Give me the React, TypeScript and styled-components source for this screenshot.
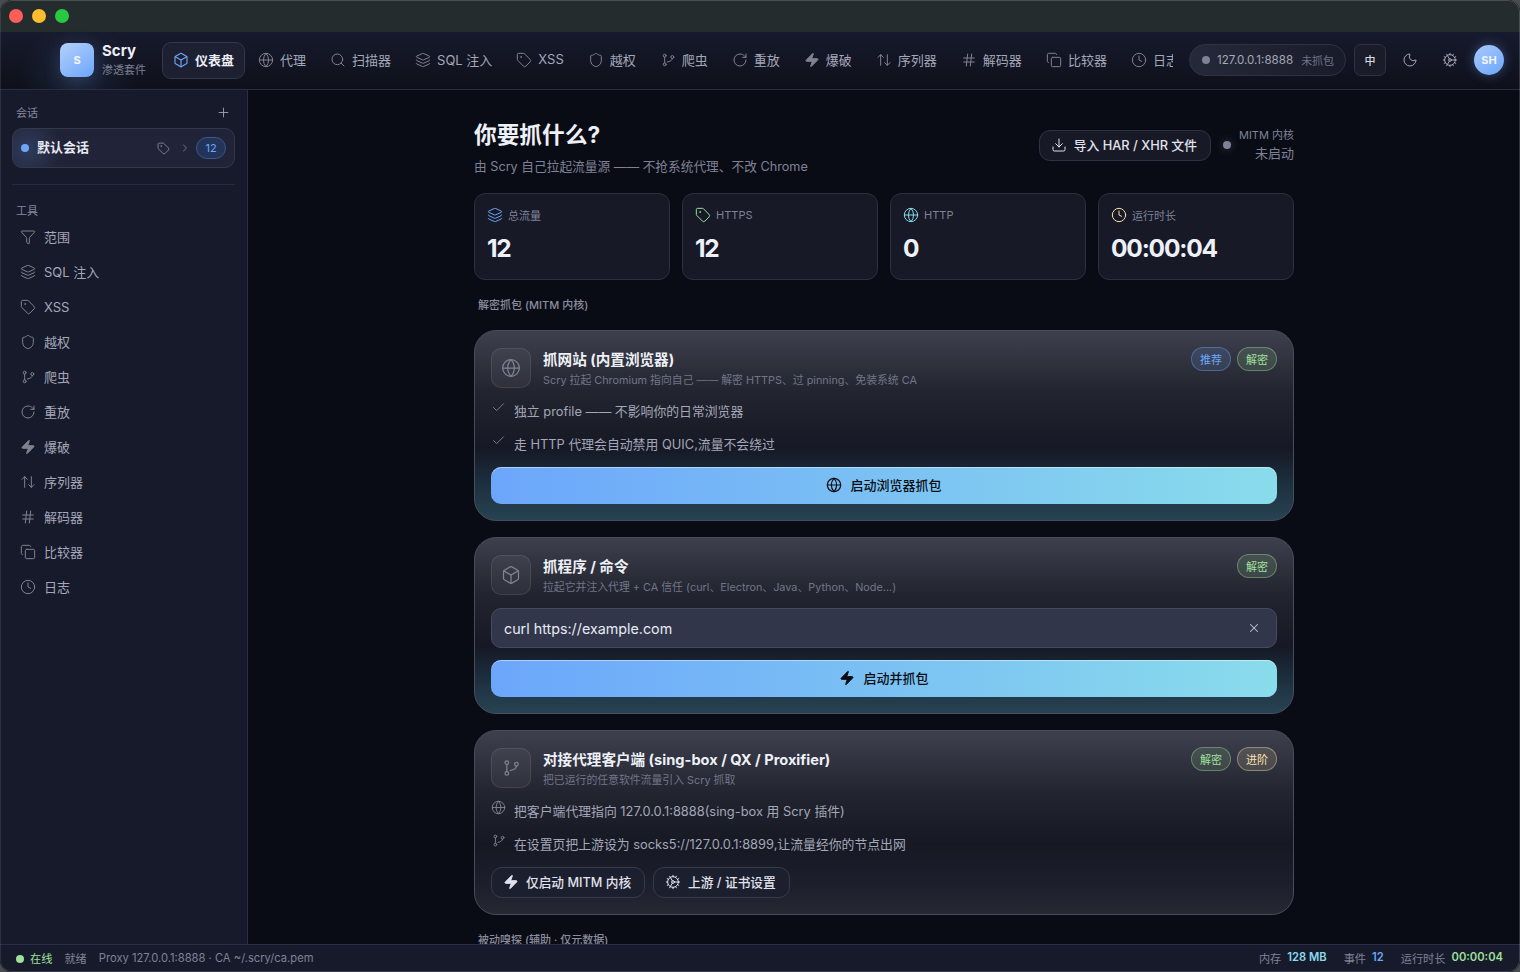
import { ReactNode } from 'react'
import styled, { createGlobalStyle } from 'styled-components'
import {
  ArrowUpDown,
  Box,
  Check,
  ChevronRight,
  Clock,
  Cog,
  Copy,
  Download,
  Funnel,
  Globe,
  Hash,
  Layers,
  Moon,
  Plus,
  RotateCw,
  Search,
  Shield,
  Tag,
  X,
  Zap,
} from 'lucide-react'

const BLUE = '#6ca6fb'
const GREEN = '#9fe09b'
const CYAN = '#89dceb'
const YELLOW = '#f9e2af'

const GlobalStyle = createGlobalStyle`
  html, body {
    margin: 0;
    padding: 0;
    height: 100%;
    background: #4a4c50;
    overflow: hidden;
  }
  * {
    box-sizing: border-box;
  }
  body {
    font-family: Inter, 'Noto Sans CJK SC', sans-serif;
    color: #e4e6f0;
  }
`

const Window = styled.div`
  position: relative;
  width: 1520px;
  height: 972px;
  border-radius: 12px;
  overflow: hidden;
  display: flex;
  flex-direction: column;
  background: #0a0c15;

  &::after {
    content: '';
    position: absolute;
    inset: 0;
    border-radius: 12px;
    border: 1px solid rgba(255, 255, 255, 0.16);
    border-left-color: rgba(255, 255, 255, 0.1);
    pointer-events: none;
  }
`

const TitleBar = styled.div`
  flex: 0 0 32px;
  display: flex;
  align-items: center;
  gap: 9px;
  padding-left: 9px;
  background: #252c2e;
`

const Light = styled.span<{ $color: string }>`
  width: 14px;
  height: 14px;
  border-radius: 50%;
  background: ${(props) => props.$color};
`

const TopBar = styled.header`
  flex: 0 0 58px;
  display: flex;
  align-items: center;
  padding: 0 16px 1px 60px;
  background:
    radial-gradient(circle at 78px 50px, rgba(108, 166, 251, 0.12), transparent 60px),
    linear-gradient(180deg, #171a2d 0%, #0e101a 100%);
  border-bottom: 1px solid #2a2d44;
`

const Brand = styled.div`
  flex: 0 0 102px;
  display: flex;
  align-items: center;
  gap: 8px;
`

const LogoMark = styled.div`
  width: 34px;
  height: 34px;
  border-radius: 8px;
  display: flex;
  align-items: center;
  justify-content: center;
  background: linear-gradient(145deg, #b5d0fb 0%, #6ca6fb 100%);
  color: #f4f7ff;
  font-size: 11px;
  font-weight: 700;
  box-shadow: 0 4px 18px rgba(108, 166, 251, 0.22);
`

const BrandText = styled.div`
  display: flex;
  flex-direction: column;
  gap: 3px;
`

const BrandName = styled.span`
  font-size: 15px;
  line-height: 18px;
  font-weight: 700;
  color: #eceef6;
`

const BrandSub = styled.span`
  font-size: 11px;
  line-height: 15px;
  color: #7d8093;
  white-space: nowrap;
`

const Nav = styled.nav`
  width: 1011px;
  flex: 0 0 1011px;
  display: flex;
  align-items: center;
  gap: 2px;
  overflow: hidden;
`

const NavItem = styled.div<{ $active?: boolean }>`
  flex: 0 0 auto;
  height: 37px;
  display: flex;
  align-items: center;
  gap: 6px;
  padding: 0 10px;
  border-radius: 9px;
  border: 1px solid ${(props) => (props.$active ? '#33374c' : 'transparent')};
  background: ${(props) => (props.$active ? '#1c2031' : 'transparent')};
  color: ${(props) => (props.$active ? '#eceef6' : '#a4a7b8')};
  font-size: 13px;
  font-weight: ${(props) => (props.$active ? 600 : 400)};
  white-space: nowrap;

  svg {
    flex: none;
    color: ${(props) => (props.$active ? BLUE : '#80838f')};
  }
`

const NavLabel = styled.span`
  margin-top: -2px;
`

const TopActions = styled.div`
  margin-left: 16px;
  display: flex;
  align-items: center;
`

const ProxyPill = styled.div`
  width: 157px;
  height: 32px;
  display: flex;
  align-items: center;
  padding: 0 0 0 12px;
  border-radius: 16px;
  border: 1px solid #2f3246;
  background: linear-gradient(90deg, #262939 0%, #191b29 100%);
  font-size: 11.6px;
  color: #a4a7b8;
  white-space: nowrap;
`

const PillDot = styled.span`
  width: 8px;
  height: 8px;
  border-radius: 50%;
  background: #7e8196;
  margin-right: 7px;
`

const PillMuted = styled.span`
  margin-left: 8px;
  font-size: 11px;
  color: #6f7286;
`

const LangButton = styled.div`
  width: 32px;
  height: 32px;
  margin-left: 8px;
  display: flex;
  align-items: center;
  justify-content: center;
  border-radius: 7px;
  border: 1px solid #2f3246;
  background: #1a1c2a;
  color: #d5d7e2;
  font-size: 11px;
  font-weight: 500;
`

const IconButton = styled.div`
  width: 32px;
  height: 32px;
  margin-left: 8px;
  display: flex;
  align-items: center;
  justify-content: center;
  color: #a4a7b8;
`

const Avatar = styled.div`
  width: 30px;
  height: 30px;
  margin-left: 8px;
  border-radius: 50%;
  display: flex;
  align-items: center;
  justify-content: center;
  background: linear-gradient(145deg, #a9c9fb 0%, #6ca6fb 100%);
  color: #f2f6ff;
  font-size: 11px;
  font-weight: 700;
  box-shadow: 0 0 12px rgba(108, 166, 251, 0.4);
`

const Body = styled.div`
  flex: 1;
  min-height: 0;
  display: flex;
`

const Sidebar = styled.aside`
  flex: 0 0 248px;
  padding: 15px 12px 0;
  background: #171a2b;
  border-right: 1px solid #2a2d44;
`

const SideHead = styled.div`
  height: 14px;
  display: flex;
  align-items: center;
  justify-content: space-between;
  padding: 0 4px;
  font-size: 11px;
  color: #85889b;

  svg {
    color: #9a9db0;
  }
`

const SessionCard = styled.div`
  height: 40px;
  margin-top: 9px;
  display: flex;
  align-items: center;
  padding: 0 8px 0 8px;
  border-radius: 10px;
  border: 1px solid #34384e;
  background:
    radial-gradient(circle at 14px 20px, rgba(108, 166, 251, 0.18), transparent 34px),
    #212438;
`

const SessionDot = styled.span`
  width: 8px;
  height: 8px;
  border-radius: 50%;
  background: ${BLUE};
  margin-right: 8px;
`

const SessionName = styled.span`
  flex: 1;
  margin-top: -4px;
  font-size: 13px;
  font-weight: 600;
  color: #e8eaf2;
`

const SessionIcons = styled.span`
  display: flex;
  align-items: center;
  gap: 9px;
  color: #8f92a5;
`

const CountPill = styled.span`
  width: 30px;
  height: 22px;
  margin-left: 5px;
  display: flex;
  align-items: center;
  justify-content: center;
  border-radius: 11px;
  border: 1px solid #3c5686;
  background: #23345a;
  color: ${BLUE};
  font-size: 11px;
`

const SideRule = styled.div`
  height: 1px;
  margin: 16px 0 19px;
  background: #262a40;
`

const SideLabel = styled.div`
  padding-left: 4px;
  font-size: 11px;
  line-height: 14px;
  color: #85889b;
`

const SideList = styled.div`
  margin-top: 1px;
  display: flex;
  flex-direction: column;
`

const SideItem = styled.div`
  height: 35px;
  display: flex;
  align-items: center;
  gap: 8px;
  padding-left: 8px;
  font-size: 13px;
  color: #a4a7b8;

  svg {
    flex: none;
    color: #80838f;
  }
`

const Main = styled.main`
  flex: 1;
  min-width: 0;
  overflow: hidden;
  padding-top: 30px;
`

const Content = styled.div`
  width: 820px;
  margin: 0 auto;
`

const PageHead = styled.div`
  display: flex;
  align-items: flex-start;
  justify-content: space-between;
`

const PageTitle = styled.h1`
  margin: 0;
  font-size: 22.7px;
  line-height: 30px;
  font-weight: 700;
  color: #eef0f7;
`

const PageSub = styled.p`
  margin: 8px 0 0;
  font-size: 12.7px;
  line-height: 18px;
  color: #7f8296;
`

const HeadActions = styled.div`
  display: flex;
  align-items: center;
  padding-top: 8px;
`

const GhostButton = styled.div`
  height: 31px;
  display: flex;
  align-items: center;
  gap: 7px;
  padding: 0 13px 1px 11px;
  border-radius: 11px;
  border: 1px solid #2f3246;
  background: #171926;
  color: #e0e2ec;
  font-size: 12.8px;
  font-weight: 500;
  white-space: nowrap;

  svg {
    flex: none;
  }
`

const CoreDot = styled.span`
  width: 8px;
  height: 8px;
  margin: 0 8px 0 12px;
  border-radius: 50%;
  background: #7e8196;
  box-shadow: 0 0 8px rgba(126, 129, 150, 0.4);
`

const CoreState = styled.div`
  display: flex;
  flex-direction: column;
  align-items: flex-end;
`

const CoreLabel = styled.span`
  font-size: 11px;
  line-height: 14px;
  color: #7f8296;
`

const CoreValue = styled.span`
  margin-top: 2px;
  font-size: 13px;
  line-height: 18px;
  color: #7f8296;
`

const StatGrid = styled.div`
  margin-top: 17px;
  display: grid;
  grid-template-columns: repeat(4, 196px);
  gap: 12px;
`

const StatCard = styled.div`
  height: 87px;
  padding: 13px 12px;
  border-radius: 11px;
  border: 1px solid #2c2f40;
  background: #171926;
`

const StatLabel = styled.div`
  height: 16px;
  display: flex;
  align-items: center;
  gap: 5px;
  font-size: 11px;
  color: #7f8296;
`

const StatValue = styled.div`
  margin-top: 8px;
  font-size: 24.5px;
  line-height: 34px;
  font-weight: 700;
  letter-spacing: -1.2px;
  color: #eef0f7;
`

const SectionLabel = styled.div`
  margin: 18px 0 0 4px;
  font-size: 11px;
  line-height: 14px;
  font-weight: 500;
  color: #8a8d9f;
  white-space: nowrap;
`

const Modes = styled.div`
  margin: 18px 0 2px;
  display: flex;
  flex-direction: column;
  gap: 16px;
`

const ModeCard = styled.section<{ $glow?: boolean }>`
  padding: 17px 16px 16px;
  border-radius: 22px;
  border: 1px solid #494c5b;
  display: flex;
  flex-direction: column;
  background: ${(props) =>
    props.$glow
      ? 'linear-gradient(180deg, #3e404e 0%, #22242f 32%, #161925 62%, #1c2c3b 78%, #274353 100%)'
      : 'linear-gradient(180deg, #3e404e 0%, #22242f 34%, #161924 62%, #1c1f2b 82%, #252833 100%)'};
`

const ModeHead = styled.div`
  display: flex;
  align-items: flex-start;
  gap: 12px;
`

const ModeIcon = styled.div`
  flex: 0 0 40px;
  height: 40px;
  display: flex;
  align-items: center;
  justify-content: center;
  border-radius: 10px;
  border: 1px solid rgba(255, 255, 255, 0.09);
  background: rgba(255, 255, 255, 0.05);
  color: #7f8296;
`

const ModeText = styled.div`
  flex: 1;
  min-width: 0;
  padding-top: 2px;
`

const ModeTitle = styled.div`
  font-size: 14.6px;
  line-height: 20px;
  font-weight: 700;
  color: #eef0f7;
`

const ModeSub = styled.div`
  margin-top: 2px;
  font-size: 10.85px;
  line-height: 16px;
  color: #72758a;
`

const Badges = styled.div`
  margin-top: -1px;
  display: flex;
  gap: 6px;
`

const Badge = styled.span<{ $color: string }>`
  width: 40px;
  height: 24px;
  display: flex;
  align-items: center;
  justify-content: center;
  border-radius: 12px;
  border: 1px solid ${(props) => props.$color}66;
  background: ${(props) => props.$color}26;
  color: ${(props) => props.$color};
  font-size: 11px;
`

const Bullets = styled.div`
  margin: 6px 0 7px;
`

const Bullet = styled.div`
  height: 33px;
  display: flex;
  align-items: center;
  gap: 8px;
  font-size: 12.85px;
  color: #a4a7b8;

  svg {
    flex: none;
    margin-top: -6px;
    color: #80838f;
  }
`

const PrimaryButton = styled.div`
  width: 100%;
  height: 37px;
  display: flex;
  align-items: center;
  justify-content: center;
  gap: 8px;
  padding-bottom: 2px;
  border-radius: 10px;
  background: linear-gradient(90deg, ${BLUE} 0%, ${CYAN} 100%);
  box-shadow: inset 0 1px 0 rgba(255, 255, 255, 0.45);
  color: #0b0d14;
  font-size: 13px;
  font-weight: 500;
`

const CommandBox = styled.div`
  height: 40px;
  margin: 13px 0 12px;
  display: flex;
  align-items: center;
  justify-content: space-between;
  padding: 0 15px 0 12px;
  border-radius: 10px;
  border: 1px solid #474b5f;
  background: #31364a;
  font-size: 14.3px;
  color: #e8eaf2;

  svg {
    color: #c0c3d0;
  }
`

const ButtonRow = styled.div`
  display: flex;
  gap: 8px;
`

const OutlineButton = styled.div`
  height: 31px;
  display: flex;
  align-items: center;
  gap: 7px;
  padding: 0 13px 2px 11px;
  border-radius: 11px;
  border: 1px solid #363a4e;
  background: #1c1f2e;
  color: #e0e2ec;
  font-size: 12.7px;
  font-weight: 500;
`

const StatusBar = styled.footer`
  flex: 0 0 28px;
  display: flex;
  align-items: center;
  padding: 0 17px 2px 16px;
  background: #171a2b;
  border-top: 1px solid #2a2e4a;
  font-size: 11.2px;
  color: #7f8296;
`

const StatusDot = styled.span`
  width: 8px;
  height: 8px;
  margin: 2px 6px 0 0;
  border-radius: 50%;
  background: ${GREEN};
`

const StatusOnline = styled.span`
  color: ${GREEN};
  margin-right: 12px;
`

const StatusReady = styled.span`
  margin-right: 12px;
`

const StatusRight = styled.div`
  margin-left: auto;
  display: flex;
  gap: 17px;
`

const StatusMetric = styled.span`
  display: flex;
  gap: 6px;
`

const MetricValue = styled.b<{ $color: string }>`
  font-weight: 600;
  color: ${(props) => props.$color};
`

const stroke = 1.5

// lucide's branch icon has no top circle, the one in the app does
const BranchIcon = ({ size }: { size: number }) => (
  <svg
    width={size}
    height={size}
    viewBox='0 0 24 24'
    fill='none'
    stroke='currentColor'
    strokeWidth={stroke}
    strokeLinecap='round'
    strokeLinejoin='round'
  >
    <circle cx='7' cy='5.5' r='2.2' />
    <circle cx='7' cy='18.5' r='2.2' />
    <circle cx='18.5' cy='7.5' r='2.2' />
    <path d='M7 7.7v8.6' />
    <path d='M18.5 9.7c0 2.8-3.2 4.6-7.5 5.3' />
  </svg>
)

const navItems: { label: string; icon: ReactNode }[] = [
  { label: '代理', icon: <Globe size={16} strokeWidth={stroke} /> },
  { label: '扫描器', icon: <Search size={16} strokeWidth={stroke} /> },
  { label: 'SQL 注入', icon: <Layers size={16} strokeWidth={stroke} /> },
  { label: 'XSS', icon: <Tag size={16} strokeWidth={stroke} /> },
  { label: '越权', icon: <Shield size={16} strokeWidth={stroke} /> },
  { label: '爬虫', icon: <BranchIcon size={16} /> },
  { label: '重放', icon: <RotateCw size={16} strokeWidth={stroke} /> },
  { label: '爆破', icon: <Zap size={16} strokeWidth={stroke} fill='currentColor' /> },
  { label: '序列器', icon: <ArrowUpDown size={16} strokeWidth={stroke} /> },
  { label: '解码器', icon: <Hash size={16} strokeWidth={stroke} /> },
  { label: '比较器', icon: <Copy size={16} strokeWidth={stroke} /> },
  { label: '日志', icon: <Clock size={16} strokeWidth={stroke} /> },
]

const sideItems: { label: string; icon: ReactNode }[] = [
  { label: '范围', icon: <Funnel size={16} strokeWidth={stroke} /> },
  ...navItems.slice(2),
]

const stats: { label: string; value: string; icon: ReactNode }[] = [
  { label: '总流量', value: '12', icon: <Layers size={16} strokeWidth={stroke} color={BLUE} /> },
  { label: 'HTTPS', value: '12', icon: <Tag size={16} strokeWidth={stroke} color={GREEN} /> },
  { label: 'HTTP', value: '0', icon: <Globe size={16} strokeWidth={stroke} color={CYAN} /> },
  { label: '运行时长', value: '00:00:04', icon: <Clock size={16} strokeWidth={stroke} color={YELLOW} /> },
]

export default function App() {
  return (
    <Window>
      <GlobalStyle />
      <TitleBar>
        <Light $color='#ff5f57' />
        <Light $color='#febc2e' />
        <Light $color='#28c840' />
      </TitleBar>

      <TopBar>
        <Brand>
          <LogoMark>S</LogoMark>
          <BrandText>
            <BrandName>Scry</BrandName>
            <BrandSub>渗透套件</BrandSub>
          </BrandText>
        </Brand>
        <Nav>
          <NavItem $active>
            <Box size={16} strokeWidth={1.7} />
            <NavLabel>仪表盘</NavLabel>
          </NavItem>
          {navItems.map((item) => (
            <NavItem key={item.label}>
              {item.icon}
              <NavLabel>{item.label}</NavLabel>
            </NavItem>
          ))}
        </Nav>
        <TopActions>
          <ProxyPill>
            <PillDot />
            127.0.0.1:8888
            <PillMuted>未抓包</PillMuted>
          </ProxyPill>
          <LangButton>中</LangButton>
          <IconButton>
            <Moon size={16} strokeWidth={stroke} />
          </IconButton>
          <IconButton>
            <Cog size={16} strokeWidth={stroke} />
          </IconButton>
          <Avatar>SH</Avatar>
        </TopActions>
      </TopBar>

      <Body>
        <Sidebar>
          <SideHead>
            会话
            <Plus size={15} strokeWidth={stroke} />
          </SideHead>
          <SessionCard>
            <SessionDot />
            <SessionName>默认会话</SessionName>
            <SessionIcons>
              <Tag size={13} strokeWidth={stroke} />
              <ChevronRight size={12} strokeWidth={stroke} />
            </SessionIcons>
            <CountPill>12</CountPill>
          </SessionCard>
          <SideRule />
          <SideLabel>工具</SideLabel>
          <SideList>
            {sideItems.map((item) => (
              <SideItem key={item.label}>
                {item.icon}
                {item.label}
              </SideItem>
            ))}
          </SideList>
        </Sidebar>

        <Main>
          <Content>
            <PageHead>
              <div>
                <PageTitle>你要抓什么?</PageTitle>
                <PageSub>由 Scry 自己拉起流量源 —— 不抢系统代理、不改 Chrome</PageSub>
              </div>
              <HeadActions>
                <GhostButton>
                  <Download size={16} strokeWidth={stroke} />
                  导入 HAR / XHR 文件
                </GhostButton>
                <CoreDot />
                <CoreState>
                  <CoreLabel>MITM 内核</CoreLabel>
                  <CoreValue>未启动</CoreValue>
                </CoreState>
              </HeadActions>
            </PageHead>

            <StatGrid>
              {stats.map((stat) => (
                <StatCard key={stat.label}>
                  <StatLabel>
                    {stat.icon}
                    {stat.label}
                  </StatLabel>
                  <StatValue>{stat.value}</StatValue>
                </StatCard>
              ))}
            </StatGrid>

            <SectionLabel>解密抓包 (MITM 内核)</SectionLabel>

            <Modes>
              <ModeCard $glow>
                <ModeHead>
                  <ModeIcon>
                    <Globe size={20} strokeWidth={stroke} />
                  </ModeIcon>
                  <ModeText>
                    <ModeTitle>抓网站 (内置浏览器)</ModeTitle>
                    <ModeSub>Scry 拉起 Chromium 指向自己 —— 解密 HTTPS、过 pinning、免装系统 CA</ModeSub>
                  </ModeText>
                  <Badges>
                    <Badge $color={BLUE}>推荐</Badge>
                    <Badge $color={GREEN}>解密</Badge>
                  </Badges>
                </ModeHead>
                <Bullets>
                  <Bullet>
                    <Check size={15} strokeWidth={stroke} />
                    独立 profile —— 不影响你的日常浏览器
                  </Bullet>
                  <Bullet>
                    <Check size={15} strokeWidth={stroke} />
                    走 HTTP 代理会自动禁用 QUIC,流量不会绕过
                  </Bullet>
                </Bullets>
                <PrimaryButton>
                  <Globe size={16} strokeWidth={1.8} />
                  启动浏览器抓包
                </PrimaryButton>
              </ModeCard>

              <ModeCard $glow>
                <ModeHead>
                  <ModeIcon>
                    <Box size={20} strokeWidth={stroke} />
                  </ModeIcon>
                  <ModeText>
                    <ModeTitle>抓程序 / 命令</ModeTitle>
                    <ModeSub>拉起它并注入代理 + CA 信任 (curl、Electron、Java、Python、Node...)</ModeSub>
                  </ModeText>
                  <Badges>
                    <Badge $color={GREEN}>解密</Badge>
                  </Badges>
                </ModeHead>
                <CommandBox>
                  curl https://example.com
                  <X size={14} strokeWidth={1.8} />
                </CommandBox>
                <PrimaryButton>
                  <Zap size={16} strokeWidth={stroke} fill='currentColor' />
                  启动并抓包
                </PrimaryButton>
              </ModeCard>

              <ModeCard>
                <ModeHead>
                  <ModeIcon>
                    <BranchIcon size={20} />
                  </ModeIcon>
                  <ModeText>
                    <ModeTitle>对接代理客户端 (sing-box / QX / Proxifier)</ModeTitle>
                    <ModeSub>把已运行的任意软件流量引入 Scry 抓取</ModeSub>
                  </ModeText>
                  <Badges>
                    <Badge $color={GREEN}>解密</Badge>
                    <Badge $color={YELLOW}>进阶</Badge>
                  </Badges>
                </ModeHead>
                <Bullets>
                  <Bullet>
                    <Globe size={15} strokeWidth={stroke} />
                    把客户端代理指向 127.0.0.1:8888(sing-box 用 Scry 插件)
                  </Bullet>
                  <Bullet>
                    <BranchIcon size={15} />
                    在设置页把上游设为 socks5://127.0.0.1:8899,让流量经你的节点出网
                  </Bullet>
                </Bullets>
                <ButtonRow>
                  <OutlineButton>
                    <Zap size={16} strokeWidth={stroke} fill='currentColor' />
                    仅启动 MITM 内核
                  </OutlineButton>
                  <OutlineButton>
                    <Cog size={16} strokeWidth={stroke} />
                    上游 / 证书设置
                  </OutlineButton>
                </ButtonRow>
              </ModeCard>
            </Modes>

            <SectionLabel>被动嗅探 (辅助 · 仅元数据)</SectionLabel>
          </Content>
        </Main>
      </Body>

      <StatusBar>
        <StatusDot />
        <StatusOnline>在线</StatusOnline>
        <StatusReady>就绪</StatusReady>
        Proxy 127.0.0.1:8888 · CA ~/.scry/ca.pem
        <StatusRight>
          <StatusMetric>
            内存 <MetricValue $color={CYAN}>128 MB</MetricValue>
          </StatusMetric>
          <StatusMetric>
            事件 <MetricValue $color={BLUE}>12</MetricValue>
          </StatusMetric>
          <StatusMetric>
            运行时长 <MetricValue $color={GREEN}>00:00:04</MetricValue>
          </StatusMetric>
        </StatusRight>
      </StatusBar>
    </Window>
  )
}
